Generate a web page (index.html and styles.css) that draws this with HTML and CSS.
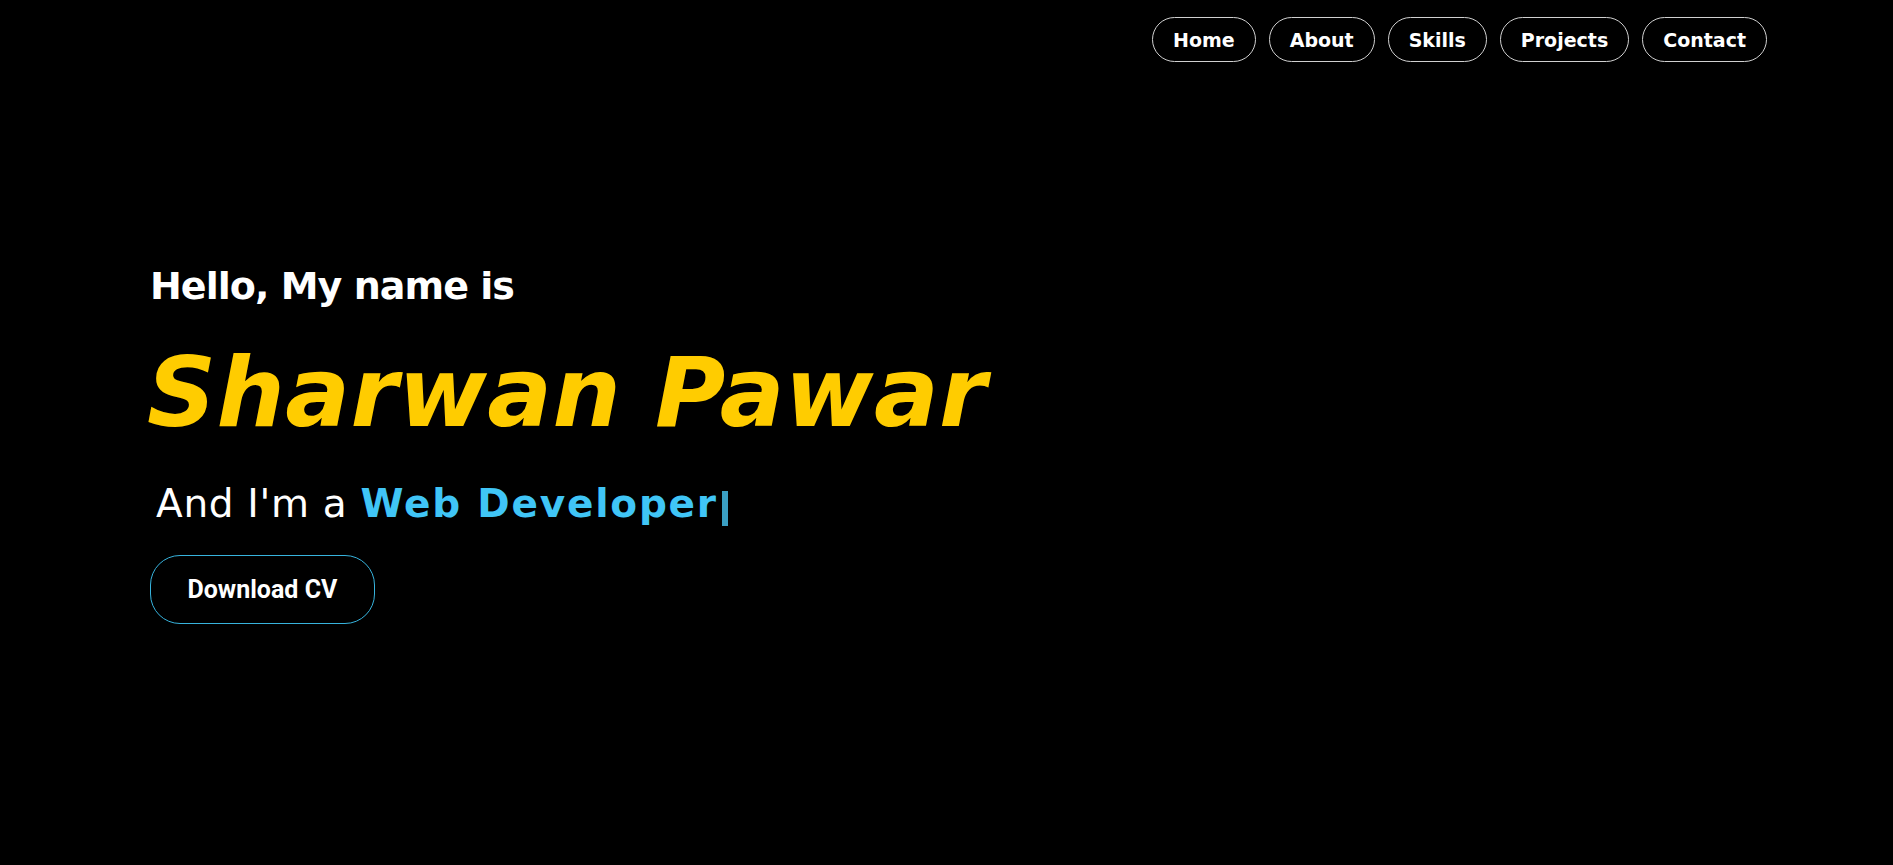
FILE: index.html
```html
<!DOCTYPE html>
<html lang="en">
<head>
<meta charset="utf-8">
<title>Sharwan Pawar</title>
<link rel="stylesheet" href="styles.css">
</head>
<body>
<header class="header">
  <nav class="nav">
    <a class="nav-link" href="#home">Home</a>
    <a class="nav-link" href="#about">About</a>
    <a class="nav-link" href="#skills">Skills</a>
    <a class="nav-link" href="#projects">Projects</a>
    <a class="nav-link" href="#contact">Contact</a>
  </nav>
</header>
<main class="hero">
  <h3 class="hello">Hello, My name is</h3>
  <h1 class="name">Sharwan Pawar</h1>
  <h2 class="role">And I'm a <span class="typed">Web Developer</span><span class="cursor"></span></h2>
  <a class="cv-btn" href="#">Download CV</a>
</main>
</body>
</html>
```
FILE: styles.css
```css
html, body {
  margin: 0;
  background: #000;
  color: #fff;
  font-family: "DejaVu Sans", sans-serif;
}
.header {
  display: flex;
  justify-content: flex-end;
  padding: 17px 126px 0 0;
}
.nav {
  display: flex;
  gap: 13px;
}
.nav-link {
  box-sizing: border-box;
  height: 45px;
  display: flex;
  align-items: center;
  padding: 0 20px;
  border: 1px solid #d0d0d0;
  border-radius: 23px;
  color: #fff;
  text-decoration: none;
  font-weight: 700;
  font-size: 19px;
}
.hero {
  display: flex;
  flex-direction: column;
  align-items: flex-start;
  padding-left: 150px;
  margin-top: 199.5px;
}
.hello {
  margin: 0;
  font-size: 38px;
  line-height: 48px;
  font-weight: 700;
  letter-spacing: -0.95px;
}
.name {
  margin: 23.3px 0 0 -3px;
  font-size: 96px;
  line-height: 120px;
  font-weight: 800;
  font-style: italic;
  letter-spacing: 0.4px;
  color: #ffcc00;
}
.role {
  margin: 27.7px 0 0 6px;
  font-size: 39px;
  line-height: 48px;
  font-weight: 400;
  letter-spacing: 0.7px;
  white-space: nowrap;
}
.typed {
  color: #40c5f6;
  font-weight: 700;
  letter-spacing: 1.8px;
}
.cursor {
  display: inline-block;
  width: 6px;
  height: 35px;
  margin-left: 4px;
  vertical-align: -9px;
  background: #3a9fc3;
}
.cv-btn {
  display: block;
  margin-top: 26.5px;
  padding: 19px 36.5px;
  line-height: 29px;
  border: 1px solid #37b3dd;
  border-radius: 30px;
  color: #fff;
  text-decoration: none;
  font-family: Roboto, sans-serif;
  font-weight: 700;
  font-size: 25px;
}
```
